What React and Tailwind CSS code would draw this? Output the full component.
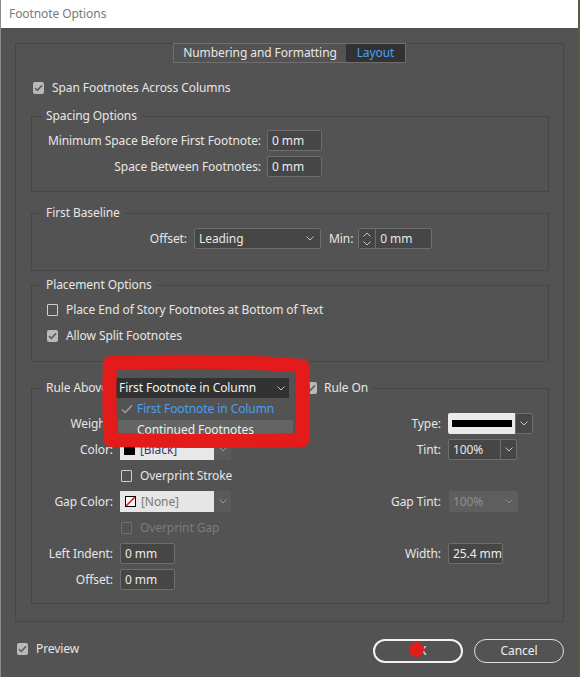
import React from "react";

function Chevron({ up = false, color = "#c4c4c4" }) {
  return (
    <svg width="8" height="5" viewBox="0 0 8 5" className="shrink-0">
      <path
        d={up ? "M0.5 4.5 L4 1 L7.5 4.5" : "M0.5 0.5 L4 4 L7.5 0.5"}
        fill="none"
        stroke={color}
        strokeWidth="1"
      />
    </svg>
  );
}

function Check({ checked = false, disabled = false }) {
  if (checked) {
    return (
      <span className="flex h-[12px] w-[11px] shrink-0 items-center justify-center rounded-[2px] bg-[#b9b9b9]">
        <svg width="9" height="8" viewBox="0 0 9 8">
          <path d="M1 4.2 L3.4 6.4 L8 1.4" fill="none" stroke="#5e5e5e" strokeWidth="1.6" />
        </svg>
      </span>
    );
  }
  return (
    <span
      className={
        disabled
          ? "h-[12px] w-[11px] shrink-0 rounded-[1px] border border-[#707070]"
          : "h-[12px] w-[11px] shrink-0 rounded-[1px] border border-[#cfcfcf]"
      }
    />
  );
}

function Field({ value, w = "w-[55px]" }) {
  return (
    <div
      className={`flex h-[21px] ${w} shrink-0 items-center overflow-hidden whitespace-nowrap rounded-[2px] border border-[#6e6e6e] bg-[#464646] pl-[4px] text-[#ececec]`}
    >
      {value}
    </div>
  );
}

function Group({ legend, children }) {
  return (
    <fieldset className="ml-[15px] mr-[14px] border border-[#474747]">
      <legend className="ml-[10px] px-[4px] leading-[16px] text-[#e6e6e6]">{legend}</legend>
      {children}
    </fieldset>
  );
}

function CheckRow({ checked, disabled, label, className = "" }) {
  return (
    <div className={`flex h-[20px] items-center ${className}`}>
      <Check checked={checked} disabled={disabled} />
      <span className={disabled ? "ml-[8px] text-[#7c7c7c]" : "ml-[8px] text-[#e6e6e6]"}>{label}</span>
    </div>
  );
}

function RuleRow({ label, left, rightLabel, right }) {
  return (
    <div className="flex h-[21px] items-center">
      <div className="w-[81px] text-right">{label}</div>
      <div className="ml-[7px] flex items-center">{left}</div>
      {rightLabel && (
        <div className="ml-auto mr-[14px] flex items-center">
          <span>{rightLabel}</span>
          <div className="ml-[7px] flex w-[86px] items-center">{right}</div>
        </div>
      )}
    </div>
  );
}

export default function App() {
  return (
    <div className="relative flex h-[677px] w-[580px] overflow-hidden bg-[#5d5a4b] font-['Noto_Sans',sans-serif] text-[12px] leading-none tracking-[-0.08px] text-[#e6e6e6]">
      <div className="flex h-full w-[578px] flex-col border-l border-[#8c8c8c] bg-[#535353]">
        {/* Title bar */}
        <div className="flex h-[28px] shrink-0 items-center bg-white pl-[8px] text-[12px] text-[#7a7a7a]">
          Footnote Options
        </div>

        {/* Main panel */}
        <div className="ml-[14px] mt-[15px] flex w-[549px] flex-col border border-[#474747] pb-[17px]">
          {/* Tabs */}
          <div className="-mt-px flex justify-center">
            <div className="flex h-[20px] border border-[#6e6e6e]">
              <div className="flex w-[172px] items-center justify-center text-[#e8e8e8]">
                Numbering and Formatting
              </div>
              <div className="flex w-[59px] items-center justify-center bg-[#323232] text-[#4b9ff2]">
                Layout
              </div>
            </div>
          </div>

          <CheckRow checked label="Span Footnotes Across Columns" className="ml-[17px] mt-[15px]" />

          {/* Spacing Options */}
          <div className="mt-[10px]">
            <Group legend="Spacing Options">
              <div className="mt-[6px] flex h-[21px] items-center">
                <div className="w-[229px] text-right">Minimum Space Before First Footnote:</div>
                <div className="ml-[6px]">
                  <Field value="0 mm" />
                </div>
              </div>
              <div className="mb-[14px] mt-[5px] flex h-[21px] items-center">
                <div className="w-[229px] text-right">Space Between Footnotes:</div>
                <div className="ml-[6px]">
                  <Field value="0 mm" />
                </div>
              </div>
            </Group>
          </div>

          {/* First Baseline */}
          <div className="mt-[13px]">
            <Group legend="First Baseline">
              <div className="mb-[21px] mt-[7px] flex h-[21px] items-center">
                <div className="w-[155px] text-right">Offset:</div>
                <div className="ml-[7px] flex h-[21px] w-[127px] items-center justify-between rounded-[2px] border border-[#6e6e6e] bg-[#464646] pl-[4px] pr-[6px]">
                  <span>Leading</span>
                  <Chevron />
                </div>
                <span className="ml-[8px]">Min:</span>
                <div className="ml-[5px] flex h-[21px] w-[74px] items-center rounded-[2px] border border-[#6e6e6e] bg-[#464646]">
                  <div className="flex h-full w-[17px] flex-col items-center justify-center gap-[4px] border-r border-[#6e6e6e]">
                    <Chevron up />
                    <Chevron />
                  </div>
                  <span className="pl-[4px]">0 mm</span>
                </div>
              </div>
            </Group>
          </div>

          {/* Placement Options */}
          <div className="mt-[6px]">
            <Group legend="Placement Options">
              <CheckRow label="Place End of Story Footnotes at Bottom of Text" className="ml-[15px] mt-[7px]" />
              <CheckRow checked label="Allow Split Footnotes" className="mb-[15px] ml-[15px] mt-[6px]" />
            </Group>
          </div>

          {/* Rule Above */}
          <div className="mt-[16px]">
            <fieldset className="ml-[15px] mr-[14px] border border-[#474747]">
              <legend className="ml-[10px] px-[4px]">
                <div className="relative flex h-[20px] items-center">
                  <span className="w-[70px]">Rule Above:</span>
                  <div className="relative flex h-[20px] w-[173px] items-center justify-between bg-[#323232] pl-[3px] pr-[4px] text-[#f0f0f0]">
                    <span>First Footnote in Column</span>
                    <Chevron />
                    <div className="absolute left-[2px] top-[20px] z-10 flex w-[175px] flex-col bg-[#535353]">
                      <div className="flex h-[22px] items-center text-[#4b9ff2]">
                        <svg width="12" height="10" viewBox="0 0 12 10" className="ml-[3px]">
                          <path d="M1 5.5 L4.2 8.5 L11 1.5" fill="none" stroke="#a0a0a0" strokeWidth="1.5" />
                        </svg>
                        <span className="ml-[4px]">First Footnote in Column</span>
                      </div>
                      <div className="flex h-[19px] items-center bg-[#646464] pl-[19px] text-[#eeeeee]">
                        Continued Footnotes
                      </div>
                    </div>
                  </div>
                  <div className="ml-[17px]">
                    <Check checked />
                  </div>
                  <span className="ml-[7px]">Rule On</span>
                </div>
              </legend>

              <div className="mb-[13px] mt-[15px] flex flex-col gap-[5px]">
                <RuleRow
                  label="Weight:"
                  left={null}
                  rightLabel="Type:"
                  right={
                    <div className="flex h-[21px] items-center">
                      <div className="flex h-[21px] w-[67px] items-center rounded-l-[2px] bg-[#ebebeb] pl-[4px]">
                        <div className="h-[7px] w-[60px] bg-black" />
                      </div>
                      <div className="flex h-[21px] w-[18px] items-center justify-center rounded-r-[2px] border border-[#6e6e6e] bg-[#474747]">
                        <Chevron />
                      </div>
                    </div>
                  }
                />
                <RuleRow
                  label="Color:"
                  left={
                    <div className="flex h-[21px] items-center">
                      <div className="flex h-[21px] w-[94px] items-center bg-[#e8e8e8] pl-[4px]">
                        <span className="h-[10px] w-[11px] bg-black" />
                        <span className="ml-[5px] text-[#3b3870]">[Black]</span>
                      </div>
                      <div className="flex h-[21px] w-[17px] items-center justify-center bg-[#5a5a5a]">
                        <Chevron color="#9a9a9a" />
                      </div>
                    </div>
                  }
                  rightLabel="Tint:"
                  right={
                    <div className="flex h-[21px] w-[69px] items-center rounded-[2px] border border-[#6e6e6e] bg-[#464646]">
                      <span className="w-[51px] pl-[4px]">100%</span>
                      <div className="flex h-full flex-1 items-center justify-center border-l border-[#6e6e6e]">
                        <Chevron />
                      </div>
                    </div>
                  }
                />
                <RuleRow label="" left={<CheckRow label="Overprint Stroke" className="ml-[1px]" />} />
                <RuleRow
                  label="Gap Color:"
                  left={
                    <div className="flex h-[21px] items-center">
                      <div className="flex h-[21px] w-[94px] items-center bg-[#e6e6e6] pl-[5px]">
                        <svg width="11" height="11" viewBox="0 0 11 11">
                          <rect x="0.5" y="0.5" width="10" height="10" fill="white" stroke="black" />
                          <path d="M1 10 L10 1" stroke="#e01515" strokeWidth="1.6" />
                        </svg>
                        <span className="ml-[5px] text-[#7a7a7a]">[None]</span>
                      </div>
                      <div className="flex h-[21px] w-[17px] items-center justify-center bg-[#5a5a5a]">
                        <Chevron color="#9a9a9a" />
                      </div>
                    </div>
                  }
                  rightLabel="Gap Tint:"
                  right={
                    <div className="ml-[1px] flex h-[21px] w-[69px] items-center justify-between rounded-[2px] bg-[#5e5e5e] pl-[4px] pr-[5px] text-[#8e8e8e]">
                      <span>100%</span>
                      <Chevron color="#8e8e8e" />
                    </div>
                  }
                />
                <RuleRow label="" left={<CheckRow disabled label="Overprint Gap" className="ml-[1px]" />} />
                <RuleRow
                  label="Left Indent:"
                  left={<Field value="0 mm" />}
                  rightLabel="Width:"
                  right={<Field value="25.4 mm" />}
                />
                <RuleRow label="Offset:" left={<Field value="0 mm" />} />
              </div>
            </fieldset>
          </div>
        </div>

        {/* Bottom bar */}
        <div className="mt-[17px] flex h-[24px] items-start">
          <div className="ml-[16px] mt-[0px]">
            <CheckRow checked label="Preview" />
          </div>
          <div className="ml-auto mr-[14px] flex gap-[11px]">
            <button className="flex h-[24px] w-[90px] items-center justify-center rounded-full border-2 border-[#f2f2f2] text-[#f4f4f4]">
              OK
            </button>
            <button className="flex h-[24px] w-[90px] items-center justify-center rounded-full border border-[#e2e2e2] text-[#eeeeee]">
              Cancel
            </button>
          </div>
        </div>
      </div>
      <div className="h-full w-[2px] bg-[#5d5a4b]" />

      {/* Red annotation marks */}
      <svg
        className="pointer-events-none absolute left-0 top-0 z-20"
        width="580"
        height="677"
        viewBox="0 0 580 677"
      >
        <path
          d="M110 363 C 180 361, 250 361, 302 366 C 304 390, 303 415, 302 440 C 230 442, 160 441, 111 440 C 109 415, 109 390, 110 363 Z"
          fill="none"
          stroke="#e31b1b"
          strokeWidth="14"
          strokeLinejoin="round"
        />
        <circle cx="416.5" cy="649.5" r="7.5" fill="#e31b1b" />
      </svg>
    </div>
  );
}
